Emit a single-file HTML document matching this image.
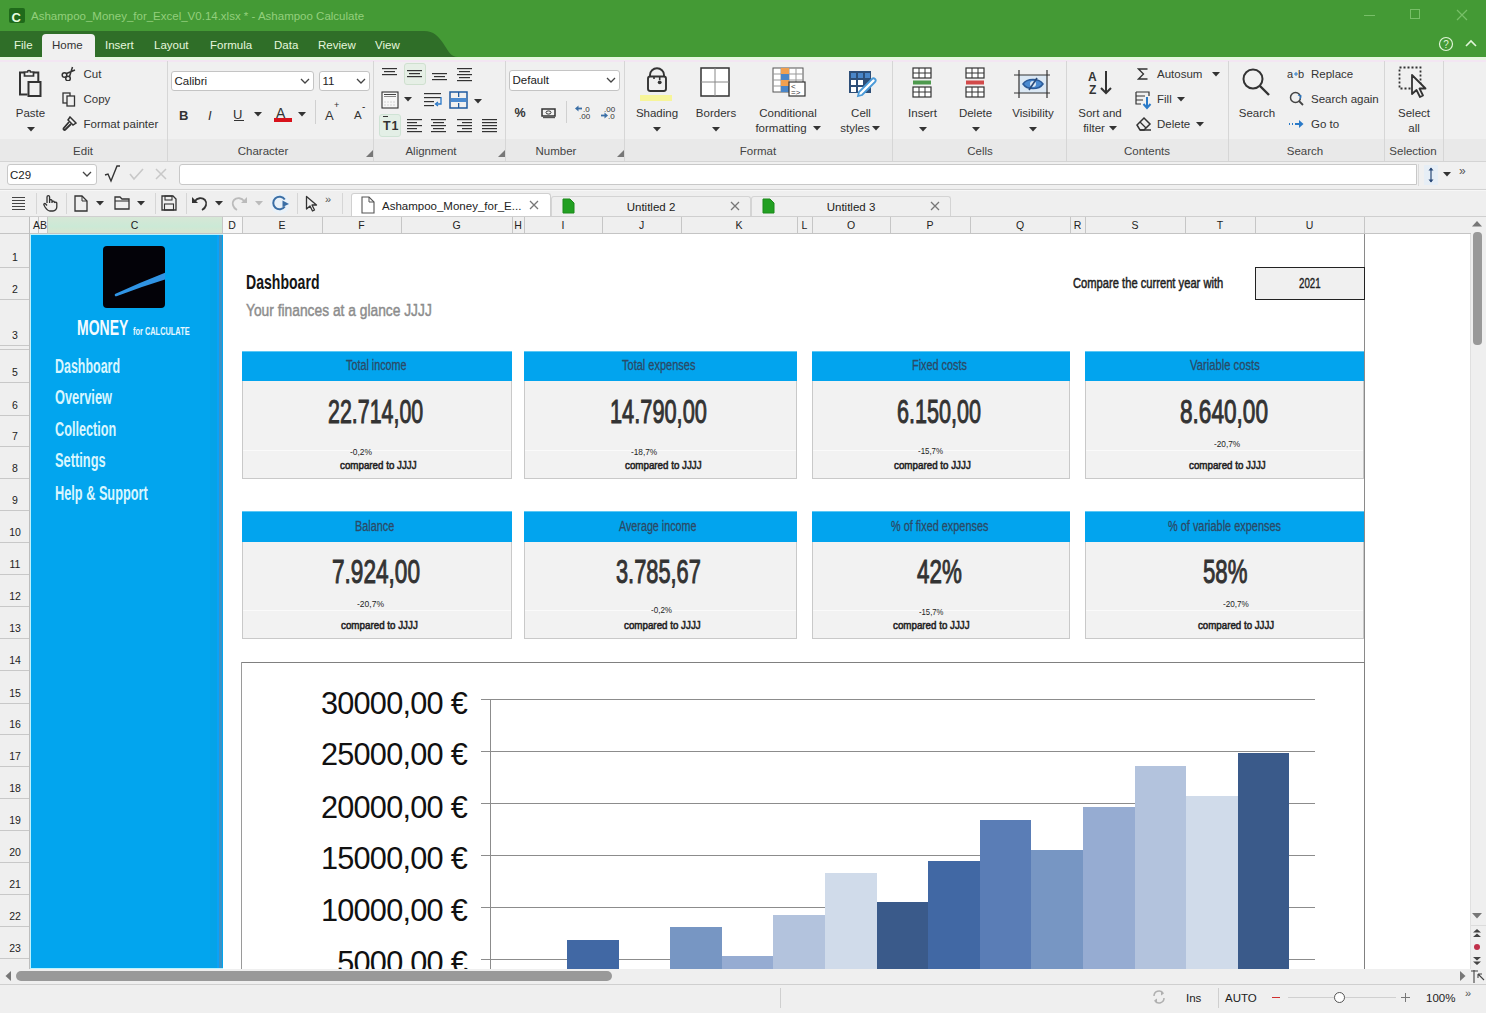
<!DOCTYPE html><html><head><meta charset="utf-8"><style>
html,body{margin:0;padding:0;}
body{width:1486px;height:1013px;overflow:hidden;position:relative;background:#efefef;font-family:"Liberation Sans",sans-serif;}
.t{position:absolute;white-space:nowrap;line-height:1;}
.r{position:absolute;}
</style></head><body>
<div class="r" style="left:0px;top:0px;width:1486px;height:31px;background:#449a35;"></div>
<div class="r" style="left:9px;top:8px;width:16px;height:15px;background:#1f6a1a;border-radius:2px;"></div>
<div class="t" style="left:11.5px;top:11.00px;font-size:13px;color:#e8ffe0;font-weight:bold;font-family:'Liberation Sans';">C</div>
<div class="t" style="left:31px;top:11.27px;font-size:11.5px;color:#93cf7c;font-weight:normal;font-family:'Liberation Sans';">Ashampoo_Money_for_Excel_V0.14.xlsx * - Ashampoo Calculate</div>
<div class="r" style="left:1364px;top:15px;width:11px;height:1px;background:#78bf68;"></div>
<div class="r" style="left:1410px;top:9px;width:10px;height:10px;background:none;border:1px solid #78bf68;box-sizing:border-box;"></div>
<svg class="r" style="left:1456px;top:9px;" width="12" height="12" viewBox="0 0 12 12"><path d="M1 1L11 11M11 1L1 11" stroke="#78bf68" stroke-width="1.2"/></svg>
<svg class="r" style="left:0px;top:31px;" width="1486" height="26" viewBox="0 0 1486 26"><rect x="0" y="0" width="1486" height="27" fill="#449a35"/><path d="M0 0H424C434 0 438 5 443 12C449 21 451 26 458 26H0Z" fill="#2f6e28"/></svg>
<div class="r" style="left:0px;top:57px;width:1486px;height:3px;background:#e6f7df;"></div>
<div class="r" style="left:42px;top:34px;width:53px;height:26px;background:#f0f0f0;border-radius:4px 4px 0 0;"></div>
<div class="t" style="left:14px;top:40.27px;font-size:11.5px;color:#e6f7dd;font-weight:normal;font-family:'Liberation Sans';">File</div>
<div class="t" style="left:52px;top:40.27px;font-size:11.5px;color:#333;font-weight:normal;font-family:'Liberation Sans';">Home</div>
<div class="t" style="left:105px;top:40.27px;font-size:11.5px;color:#e6f7dd;font-weight:normal;font-family:'Liberation Sans';">Insert</div>
<div class="t" style="left:154px;top:40.27px;font-size:11.5px;color:#e6f7dd;font-weight:normal;font-family:'Liberation Sans';">Layout</div>
<div class="t" style="left:210px;top:40.27px;font-size:11.5px;color:#e6f7dd;font-weight:normal;font-family:'Liberation Sans';">Formula</div>
<div class="t" style="left:274px;top:40.27px;font-size:11.5px;color:#e6f7dd;font-weight:normal;font-family:'Liberation Sans';">Data</div>
<div class="t" style="left:318px;top:40.27px;font-size:11.5px;color:#e6f7dd;font-weight:normal;font-family:'Liberation Sans';">Review</div>
<div class="t" style="left:375px;top:40.27px;font-size:11.5px;color:#e6f7dd;font-weight:normal;font-family:'Liberation Sans';">View</div>
<svg class="r" style="left:1438px;top:36px;" width="16" height="16" viewBox="0 0 16 16"><circle cx="8" cy="8" r="6.5" fill="none" stroke="#e0f5d8" stroke-width="1.2"/><text x="8" y="11.5" font-size="10" text-anchor="middle" fill="#e0f5d8" font-family="Liberation Sans">?</text></svg>
<svg class="r" style="left:1465px;top:39px;" width="12" height="8" viewBox="0 0 12 8"><path d="M1 7L6 2L11 7" fill="none" stroke="#e0f5d8" stroke-width="1.6"/></svg>
<div class="r" style="left:0px;top:60px;width:1486px;height:101px;background:#f0f0f0;"></div>
<div class="r" style="left:0px;top:60px;width:1486px;height:2px;background:#f3e6f3;"></div>
<div class="r" style="left:0px;top:139px;width:1486px;height:22px;background:#e9e9e9;"></div>
<div class="r" style="left:0px;top:161px;width:1486px;height:1px;background:#d4d4d4;"></div>
<div class="r" style="left:167px;top:61px;width:1px;height:100px;background:#d6d6d6;"></div>
<div class="r" style="left:373px;top:61px;width:1px;height:100px;background:#d6d6d6;"></div>
<div class="r" style="left:505px;top:61px;width:1px;height:100px;background:#d6d6d6;"></div>
<div class="r" style="left:624px;top:61px;width:1px;height:100px;background:#d6d6d6;"></div>
<div class="r" style="left:892px;top:61px;width:1px;height:100px;background:#d6d6d6;"></div>
<div class="r" style="left:1066px;top:61px;width:1px;height:100px;background:#d6d6d6;"></div>
<div class="r" style="left:1228px;top:61px;width:1px;height:100px;background:#d6d6d6;"></div>
<div class="r" style="left:1384px;top:61px;width:1px;height:100px;background:#d6d6d6;"></div>
<div class="r" style="left:1443px;top:61px;width:1px;height:100px;background:#d6d6d6;"></div>
<div class="t" style="left:-417px;width:1000px;text-align:center;top:146.27px;font-size:11.5px;color:#444;font-weight:normal;font-family:'Liberation Sans';transform:scaleX(1.0);transform-origin:50% 0;">Edit</div>
<div class="t" style="left:-237px;width:1000px;text-align:center;top:146.27px;font-size:11.5px;color:#444;font-weight:normal;font-family:'Liberation Sans';transform:scaleX(1.0);transform-origin:50% 0;">Character</div>
<div class="t" style="left:-69px;width:1000px;text-align:center;top:146.27px;font-size:11.5px;color:#444;font-weight:normal;font-family:'Liberation Sans';transform:scaleX(1.0);transform-origin:50% 0;">Alignment</div>
<div class="t" style="left:56px;width:1000px;text-align:center;top:146.27px;font-size:11.5px;color:#444;font-weight:normal;font-family:'Liberation Sans';transform:scaleX(1.0);transform-origin:50% 0;">Number</div>
<div class="t" style="left:258px;width:1000px;text-align:center;top:146.27px;font-size:11.5px;color:#444;font-weight:normal;font-family:'Liberation Sans';transform:scaleX(1.0);transform-origin:50% 0;">Format</div>
<div class="t" style="left:480px;width:1000px;text-align:center;top:146.27px;font-size:11.5px;color:#444;font-weight:normal;font-family:'Liberation Sans';transform:scaleX(1.0);transform-origin:50% 0;">Cells</div>
<div class="t" style="left:647px;width:1000px;text-align:center;top:146.27px;font-size:11.5px;color:#444;font-weight:normal;font-family:'Liberation Sans';transform:scaleX(1.0);transform-origin:50% 0;">Contents</div>
<div class="t" style="left:805px;width:1000px;text-align:center;top:146.27px;font-size:11.5px;color:#444;font-weight:normal;font-family:'Liberation Sans';transform:scaleX(1.0);transform-origin:50% 0;">Search</div>
<div class="t" style="left:913px;width:1000px;text-align:center;top:146.27px;font-size:11.5px;color:#444;font-weight:normal;font-family:'Liberation Sans';transform:scaleX(1.0);transform-origin:50% 0;">Selection</div>
<svg class="r" style="left:366px;top:150px;" width="7" height="7" viewBox="0 0 7 7"><path d="M7 0V7H0Z" fill="#777"/></svg>
<svg class="r" style="left:498px;top:150px;" width="7" height="7" viewBox="0 0 7 7"><path d="M7 0V7H0Z" fill="#777"/></svg>
<svg class="r" style="left:617px;top:150px;" width="7" height="7" viewBox="0 0 7 7"><path d="M7 0V7H0Z" fill="#777"/></svg>
<svg class="r" style="left:17px;top:68px;" width="26" height="30" viewBox="0 0 26 30"><path d="M7 4.5H3V26.5H10.5M17 4.5H21.3V13" fill="none" stroke="#333" stroke-width="2"/><path d="M7.5 8V4H10.5A1.5 1.5 0 0 1 13.5 4H16.5V8Z" fill="none" stroke="#333" stroke-width="1.7"/><rect x="11.5" y="14" width="12" height="14" fill="#f0f0f0" stroke="#333" stroke-width="2"/></svg>
<div class="t" style="left:-469.5px;width:1000px;text-align:center;top:108.27px;font-size:11.5px;color:#333;font-weight:normal;font-family:'Liberation Sans';transform:scaleX(1.0);transform-origin:50% 0;">Paste</div>
<svg class="r" style="left:26.5px;top:127px;" width="8" height="5" viewBox="0 0 8 5"><path d="M0 0H8L4 4.5Z" fill="#333"/></svg>
<svg class="r" style="left:61px;top:66px;" width="16" height="15" viewBox="0 0 16 15"><circle cx="3.5" cy="9" r="2.3" fill="none" stroke="#333" stroke-width="1.5"/><circle cx="7" cy="12.5" r="2.3" fill="none" stroke="#333" stroke-width="1.5"/><path d="M5.5 7.5L14 4M8.5 10.5L11.5 1" stroke="#333" stroke-width="1.5"/></svg>
<div class="t" style="left:83.5px;top:69.27px;font-size:11.5px;color:#333;font-weight:normal;font-family:'Liberation Sans';">Cut</div>
<svg class="r" style="left:62px;top:92px;" width="14" height="15" viewBox="0 0 14 15"><rect x="1" y="1" width="7" height="10" fill="none" stroke="#333" stroke-width="1.3"/><rect x="5" y="4" width="7.5" height="10" fill="#f0f0f0" stroke="#333" stroke-width="1.3"/></svg>
<div class="t" style="left:83.5px;top:94.27px;font-size:11.5px;color:#333;font-weight:normal;font-family:'Liberation Sans';">Copy</div>
<svg class="r" style="left:61px;top:116px;" width="16" height="16" viewBox="0 0 16 16"><path d="M9 1L15 7L12 9L7 4Z" fill="none" stroke="#333" stroke-width="1.5"/><path d="M8 6L2.5 12.5A1.2 1.2 0 0 0 4 14L10 8" fill="none" stroke="#333" stroke-width="1.8"/></svg>
<div class="t" style="left:83.5px;top:119.27px;font-size:11.5px;color:#333;font-weight:normal;font-family:'Liberation Sans';">Format painter</div>
<div class="r" style="left:171px;top:71px;width:143px;height:20px;background:#fff;border:1px solid #c4c4c4;border-radius:3px;box-sizing:border-box;"></div>
<div class="t" style="left:174.5px;top:76.27px;font-size:11.5px;color:#222;font-weight:normal;font-family:'Liberation Sans';">Calibri</div>
<svg class="r" style="left:300px;top:78px;" width="10" height="6" viewBox="0 0 10 6"><path d="M1 1L5 5L9 1" fill="none" stroke="#444" stroke-width="1.3"/></svg>
<div class="r" style="left:319px;top:71px;width:51px;height:20px;background:#fff;border:1px solid #c4c4c4;border-radius:3px;box-sizing:border-box;"></div>
<div class="t" style="left:322.5px;top:76.27px;font-size:11.5px;color:#222;font-weight:normal;font-family:'Liberation Sans';">11</div>
<svg class="r" style="left:356px;top:78px;" width="10" height="6" viewBox="0 0 10 6"><path d="M1 1L5 5L9 1" fill="none" stroke="#444" stroke-width="1.3"/></svg>
<div class="t" style="left:179px;top:109.00px;font-size:13px;color:#333;font-weight:bold;font-family:'Liberation Sans';">B</div>
<div class="t" style="left:208px;top:109.00px;font-size:13px;color:#333;font-weight:normal;font-family:'Liberation Sans';font-style:italic;">I</div>
<div class="t" style="left:233px;top:108.00px;font-size:13px;color:#333;font-weight:normal;font-family:'Liberation Sans';">U</div>
<div class="r" style="left:234px;top:120px;width:10px;height:1px;background:#333;"></div>
<svg class="r" style="left:254px;top:112px;" width="8" height="5" viewBox="0 0 8 5"><path d="M0 0H8L4 4.5Z" fill="#333"/></svg>
<div class="t" style="left:276px;top:106.15px;font-size:14px;color:#333;font-weight:normal;font-family:'Liberation Sans';">A</div>
<div class="r" style="left:274px;top:118px;width:18px;height:4px;background:#d8121b;"></div>
<svg class="r" style="left:298px;top:112px;" width="8" height="5" viewBox="0 0 8 5"><path d="M0 0H8L4 4.5Z" fill="#333"/></svg>
<div class="r" style="left:315px;top:100px;width:1px;height:24px;background:#d0d0d0;"></div>
<div class="t" style="left:325px;top:109.00px;font-size:13px;color:#333;font-weight:normal;font-family:'Liberation Sans';">A</div>
<div class="t" style="left:334px;top:101.38px;font-size:9px;color:#333;font-weight:normal;font-family:'Liberation Sans';">+</div>
<div class="t" style="left:354px;top:110.27px;font-size:11.5px;color:#333;font-weight:normal;font-family:'Liberation Sans';">A</div>
<div class="t" style="left:362px;top:101.53px;font-size:10px;color:#333;font-weight:normal;font-family:'Liberation Sans';">-</div>
<div class="r" style="left:404px;top:63px;width:22px;height:22px;background:#e6efe6;border:1px solid #cfe0cf;border-radius:3px;box-sizing:border-box;"></div>
<svg class="r" style="left:382px;top:68px;" width="16" height="10" viewBox="0 0 16 10"><rect x="0" y="0" width="15" height="1.2" fill="#333"/><rect x="2" y="3" width="11" height="1.2" fill="#333"/><rect x="0" y="6" width="15" height="1.2" fill="#333"/></svg>
<svg class="r" style="left:407px;top:70px;" width="16" height="10" viewBox="0 0 16 10"><rect x="0" y="0" width="15" height="1.2" fill="#333"/><rect x="2" y="3" width="11" height="1.2" fill="#333"/><rect x="0" y="6" width="15" height="1.2" fill="#333"/></svg>
<svg class="r" style="left:432px;top:73px;" width="16" height="10" viewBox="0 0 16 10"><rect x="0" y="0" width="15" height="1.2" fill="#333"/><rect x="2" y="3" width="11" height="1.2" fill="#333"/><rect x="0" y="6" width="15" height="1.2" fill="#333"/></svg>
<svg class="r" style="left:457px;top:68px;" width="16" height="16" viewBox="0 0 16 16"><rect x="0" y="0" width="15" height="1.2" fill="#333"/><rect x="2" y="3" width="11" height="1.2" fill="#333"/><rect x="0" y="6" width="15" height="1.2" fill="#333"/><rect x="2" y="9" width="11" height="1.2" fill="#333"/><rect x="0" y="12" width="15" height="1.2" fill="#333"/></svg>
<svg class="r" style="left:381px;top:91px;" width="18" height="18" viewBox="0 0 18 18"><rect x="1" y="1" width="16" height="16" fill="#f7f7f7" stroke="#333" stroke-width="1.1"/><rect x="3" y="3" width="12" height="1" fill="#444"/><rect x="3" y="5" width="12" height="1" fill="#888" /><path d="M3 11H15M3 14H15" stroke="#ccc" stroke-width="0.8" stroke-dasharray="2 1"/></svg>
<svg class="r" style="left:404px;top:97px;" width="8" height="5" viewBox="0 0 8 5"><path d="M0 0H8L4 4.5Z" fill="#333"/></svg>
<svg class="r" style="left:424px;top:92px;" width="19" height="16" viewBox="0 0 19 16"><rect x="0" y="1" width="17" height="1.2" fill="#333"/><rect x="0" y="5" width="17" height="1.2" fill="#333"/><rect x="0" y="9" width="10" height="1.2" fill="#333"/><rect x="0" y="13" width="10" height="1.2" fill="#333"/><path d="M17 5V12H12" fill="none" stroke="#2a78c8" stroke-width="1.3"/><path d="M14 10L11.5 12L14 14" fill="none" stroke="#2a78c8" stroke-width="1.3"/></svg>
<svg class="r" style="left:449px;top:91px;" width="19" height="18" viewBox="0 0 19 18"><rect x="1" y="1" width="17" height="16" fill="none" stroke="#1e5aa0" stroke-width="1.5"/><rect x="2" y="7" width="15" height="4" fill="#4a8ad0"/><rect x="9" y="1" width="1.3" height="5" fill="#1e5aa0"/><rect x="9" y="12" width="1.3" height="5" fill="#1e5aa0"/></svg>
<svg class="r" style="left:474px;top:99px;" width="8" height="5" viewBox="0 0 8 5"><path d="M0 0H8L4 4.5Z" fill="#333"/></svg>
<div class="r" style="left:379px;top:114px;width:22px;height:23px;background:#e3efe6;border:1px solid #cfe3d5;border-radius:3px;box-sizing:border-box;"></div>
<div class="t" style="left:383px;top:120.42px;font-size:12.5px;color:#333;font-weight:bold;font-family:'Liberation Sans';">T</div>
<div class="t" style="left:391.5px;top:120.42px;font-size:12.5px;color:#333;font-weight:bold;font-family:'Liberation Sans';">1</div>
<div class="r" style="left:383px;top:116px;width:5px;height:1px;background:#333;"></div>
<svg class="r" style="left:407px;top:119px;" width="16" height="16" viewBox="0 0 16 16"><rect x="0" y="0" width="15" height="1.2" fill="#333"/><rect x="0" y="3" width="10" height="1.2" fill="#333"/><rect x="0" y="6" width="15" height="1.2" fill="#333"/><rect x="0" y="9" width="10" height="1.2" fill="#333"/><rect x="0" y="12" width="15" height="1.2" fill="#333"/></svg>
<svg class="r" style="left:431px;top:119px;" width="16" height="16" viewBox="0 0 16 16"><rect x="0" y="0" width="15" height="1.2" fill="#333"/><rect x="2" y="3" width="11" height="1.2" fill="#333"/><rect x="0" y="6" width="15" height="1.2" fill="#333"/><rect x="2" y="9" width="11" height="1.2" fill="#333"/><rect x="0" y="12" width="15" height="1.2" fill="#333"/></svg>
<svg class="r" style="left:457px;top:119px;" width="16" height="16" viewBox="0 0 16 16"><rect x="0" y="0" width="15" height="1.2" fill="#333"/><rect x="5" y="3" width="10" height="1.2" fill="#333"/><rect x="0" y="6" width="15" height="1.2" fill="#333"/><rect x="5" y="9" width="10" height="1.2" fill="#333"/><rect x="0" y="12" width="15" height="1.2" fill="#333"/></svg>
<svg class="r" style="left:482px;top:119px;" width="16" height="16" viewBox="0 0 16 16"><rect x="0" y="0" width="15" height="1.2" fill="#333"/><rect x="0" y="3" width="15" height="1.2" fill="#333"/><rect x="0" y="6" width="15" height="1.2" fill="#333"/><rect x="0" y="9" width="15" height="1.2" fill="#333"/><rect x="0" y="12" width="15" height="1.2" fill="#333"/></svg>
<div class="r" style="left:509px;top:70px;width:111px;height:21px;background:#fff;border:1px solid #c4c4c4;border-radius:3px;box-sizing:border-box;"></div>
<div class="t" style="left:512.5px;top:75.27px;font-size:11.5px;color:#222;font-weight:normal;font-family:'Liberation Sans';">Default</div>
<svg class="r" style="left:606px;top:77px;" width="10" height="6" viewBox="0 0 10 6"><path d="M1 1L5 5L9 1" fill="none" stroke="#444" stroke-width="1.3"/></svg>
<div class="t" style="left:514.5px;top:107.42px;font-size:12.5px;color:#333;font-weight:bold;font-family:'Liberation Sans';">%</div>
<svg class="r" style="left:541px;top:107px;" width="15" height="12" viewBox="0 0 15 12"><rect x="1" y="2" width="13" height="7" fill="none" stroke="#333" stroke-width="1.5"/><ellipse cx="7.5" cy="5.5" rx="2.5" ry="1.6" fill="none" stroke="#333" stroke-width="1"/><rect x="2" y="10" width="12" height="1.2" fill="#555"/></svg>
<div class="r" style="left:566px;top:101px;width:1px;height:22px;background:#d0d0d0;"></div>
<svg class="r" style="left:575px;top:104px;" width="17" height="16" viewBox="0 0 17 16"><path d="M2 4.5H7" stroke="#3a6ea5" stroke-width="1.8"/><path d="M0 4.5L3.5 1.5V7.5Z" fill="#3a6ea5"/><text x="8" y="8" font-size="8" fill="#333" font-family="Liberation Sans">.0</text><text x="4" y="15" font-size="8" fill="#333" font-family="Liberation Sans">.00</text></svg>
<svg class="r" style="left:600px;top:104px;" width="17" height="16" viewBox="0 0 17 16"><text x="4" y="8" font-size="8" fill="#333" font-family="Liberation Sans">.00</text><path d="M1 11.5H6" stroke="#3a6ea5" stroke-width="1.8"/><path d="M8 11.5L4.5 8.5V14.5Z" fill="#3a6ea5"/><text x="8" y="15" font-size="8" fill="#333" font-family="Liberation Sans">.0</text></svg>
<svg class="r" style="left:645px;top:67px;" width="24" height="26" viewBox="0 0 24 26"><path d="M5 9.5V8A6.9 6.6 0 0 1 19 8V9.5" fill="none" stroke="#333" stroke-width="1.9"/><rect x="3" y="9.5" width="18" height="14.5" rx="2.2" fill="none" stroke="#333" stroke-width="1.9"/><path d="M9 10V12M14.7 10V13" stroke="#333" stroke-width="1.6"/><circle cx="14.7" cy="15.3" r="1.9" fill="#333"/></svg>
<div class="r" style="left:640px;top:95px;width:32px;height:6px;background:#f7f59a;"></div>
<div class="t" style="left:157px;width:1000px;text-align:center;top:108.27px;font-size:11.5px;color:#333;font-weight:normal;font-family:'Liberation Sans';transform:scaleX(1.0);transform-origin:50% 0;">Shading</div>
<svg class="r" style="left:653px;top:127px;" width="8" height="5" viewBox="0 0 8 5"><path d="M0 0H8L4 4.5Z" fill="#333"/></svg>
<svg class="r" style="left:700px;top:67px;" width="31" height="31" viewBox="0 0 31 31"><rect x="1" y="1" width="28" height="28" fill="#fff" stroke="#333" stroke-width="1.5"/><path d="M15 1V29M1 15H29" stroke="#888" stroke-width="1"/></svg>
<div class="t" style="left:216px;width:1000px;text-align:center;top:108.27px;font-size:11.5px;color:#333;font-weight:normal;font-family:'Liberation Sans';transform:scaleX(1.0);transform-origin:50% 0;">Borders</div>
<svg class="r" style="left:712px;top:127px;" width="8" height="5" viewBox="0 0 8 5"><path d="M0 0H8L4 4.5Z" fill="#333"/></svg>
<svg class="r" style="left:772px;top:67px;" width="35" height="31" viewBox="0 0 35 31"><rect x="1" y="1" width="30" height="24" fill="#fff" stroke="#555" stroke-width="1"/><path d="M1 7H31M1 13H31M1 19H31M9 1V25M17 1V25M24 1V25" stroke="#999" stroke-width="1"/><rect x="9" y="1" width="8" height="6" fill="#f0a050"/><rect x="9" y="7" width="8" height="6" fill="#4a86c8"/><rect x="9" y="13" width="8" height="6" fill="#f0a050"/><rect x="9" y="19" width="8" height="6" fill="#4a86c8"/><rect x="17" y="15" width="16" height="14" fill="#fff" stroke="#333" stroke-width="1.2"/><text x="19" y="22" font-size="8" fill="#333" font-family="Liberation Sans">&lt;</text><text x="19" y="28" font-size="8" fill="#333" font-family="Liberation Sans">=&gt;</text></svg>
<div class="t" style="left:288px;width:1000px;text-align:center;top:108.27px;font-size:11.5px;color:#333;font-weight:normal;font-family:'Liberation Sans';transform:scaleX(1.0);transform-origin:50% 0;">Conditional</div>
<div class="t" style="left:281px;width:1000px;text-align:center;top:123.27px;font-size:11.5px;color:#333;font-weight:normal;font-family:'Liberation Sans';transform:scaleX(1.0);transform-origin:50% 0;">formatting</div>
<svg class="r" style="left:813px;top:126px;" width="8" height="5" viewBox="0 0 8 5"><path d="M0 0H8L4 4.5Z" fill="#333"/></svg>
<svg class="r" style="left:848px;top:70px;" width="30" height="28" viewBox="0 0 30 28"><rect x="1" y="1" width="22" height="22" fill="#2e4f78"/><rect x="3" y="10" width="5" height="5" fill="#fff"/><rect x="10" y="10" width="5" height="5" fill="#fff"/><rect x="3" y="17" width="5" height="5" fill="#fff"/><rect x="10" y="17" width="5" height="5" fill="#fff"/><rect x="3" y="3" width="5" height="5" fill="#4a86c8"/><rect x="10" y="3" width="5" height="5" fill="#4a86c8"/><rect x="17" y="3" width="5" height="5" fill="#4a86c8"/><path d="M14 25L27 12A2 2 0 0 0 24 9L11 22L10 26Z" fill="#fff" stroke="#4a9ad8" stroke-width="1.8"/></svg>
<div class="t" style="left:361px;width:1000px;text-align:center;top:108.27px;font-size:11.5px;color:#333;font-weight:normal;font-family:'Liberation Sans';transform:scaleX(1.0);transform-origin:50% 0;">Cell</div>
<div class="t" style="left:355px;width:1000px;text-align:center;top:123.27px;font-size:11.5px;color:#333;font-weight:normal;font-family:'Liberation Sans';transform:scaleX(1.0);transform-origin:50% 0;">styles</div>
<svg class="r" style="left:872px;top:126px;" width="8" height="5" viewBox="0 0 8 5"><path d="M0 0H8L4 4.5Z" fill="#333"/></svg>
<svg class="r" style="left:912px;top:67px;" width="20" height="31" viewBox="0 0 20 31"><rect x="1" y="1" width="18" height="10" fill="#fff" stroke="#333" stroke-width="1.2"/><path d="M7 1V11M13 1V11M1 6H19" stroke="#333" stroke-width="1"/><rect x="1" y="20" width="18" height="10" fill="#fff" stroke="#333" stroke-width="1.2"/><path d="M7 20V30M13 20V30M1 25H19" stroke="#333" stroke-width="1"/><rect x="1" y="13.5" width="18" height="4" fill="#4e9a4e"/></svg>
<div class="t" style="left:422.5px;width:1000px;text-align:center;top:108.27px;font-size:11.5px;color:#333;font-weight:normal;font-family:'Liberation Sans';transform:scaleX(1.0);transform-origin:50% 0;">Insert</div>
<svg class="r" style="left:919px;top:127px;" width="8" height="5" viewBox="0 0 8 5"><path d="M0 0H8L4 4.5Z" fill="#333"/></svg>
<svg class="r" style="left:965px;top:67px;" width="20" height="31" viewBox="0 0 20 31"><rect x="1" y="1" width="18" height="10" fill="#fff" stroke="#333" stroke-width="1.2"/><path d="M7 1V11M13 1V11M1 6H19" stroke="#333" stroke-width="1"/><rect x="1" y="20" width="18" height="10" fill="#fff" stroke="#333" stroke-width="1.2"/><path d="M7 20V30M13 20V30M1 25H19" stroke="#333" stroke-width="1"/><rect x="1" y="13.5" width="18" height="4" fill="#d24a4a"/></svg>
<div class="t" style="left:475.5px;width:1000px;text-align:center;top:108.27px;font-size:11.5px;color:#333;font-weight:normal;font-family:'Liberation Sans';transform:scaleX(1.0);transform-origin:50% 0;">Delete</div>
<svg class="r" style="left:972px;top:127px;" width="8" height="5" viewBox="0 0 8 5"><path d="M0 0H8L4 4.5Z" fill="#333"/></svg>
<svg class="r" style="left:1014px;top:70px;" width="38" height="28" viewBox="0 0 38 28"><rect x="5" y="5" width="28" height="18" fill="#dbe8f4"/><path d="M0 5H36M0 23H36M5 0V28M33 0V28" stroke="#333" stroke-width="1.2"/><path d="M9 14C13 8 25 8 29 14C25 20 13 20 9 14Z" fill="#4a8ad0" stroke="#2a5a98" stroke-width="1.5"/><circle cx="19" cy="14" r="3" fill="#dbe8f4"/><path d="M15 20L23 8" stroke="#2a4a78" stroke-width="1.6"/></svg>
<div class="t" style="left:533px;width:1000px;text-align:center;top:108.27px;font-size:11.5px;color:#333;font-weight:normal;font-family:'Liberation Sans';transform:scaleX(1.0);transform-origin:50% 0;">Visibility</div>
<svg class="r" style="left:1029px;top:127px;" width="8" height="5" viewBox="0 0 8 5"><path d="M0 0H8L4 4.5Z" fill="#333"/></svg>
<svg class="r" style="left:1088px;top:70px;" width="26" height="26" viewBox="0 0 26 26"><text x="0" y="11" font-size="12" font-weight="bold" fill="#333" font-family="Liberation Sans">A</text><text x="1" y="24" font-size="12" font-weight="bold" fill="#333" font-family="Liberation Sans">Z</text><path d="M18 1V23M13 18L18 23L23 18" fill="none" stroke="#333" stroke-width="2"/></svg>
<div class="t" style="left:600px;width:1000px;text-align:center;top:108.27px;font-size:11.5px;color:#333;font-weight:normal;font-family:'Liberation Sans';transform:scaleX(1.0);transform-origin:50% 0;">Sort and</div>
<div class="t" style="left:594px;width:1000px;text-align:center;top:123.27px;font-size:11.5px;color:#333;font-weight:normal;font-family:'Liberation Sans';transform:scaleX(1.0);transform-origin:50% 0;">filter</div>
<svg class="r" style="left:1109px;top:126px;" width="8" height="5" viewBox="0 0 8 5"><path d="M0 0H8L4 4.5Z" fill="#333"/></svg>
<svg class="r" style="left:1137px;top:67px;" width="12" height="14" viewBox="0 0 12 14"><path d="M10.5 2H1.5L6.5 7L1.5 12H10.5" fill="none" stroke="#333" stroke-width="1.3"/></svg>
<div class="t" style="left:1157px;top:69.27px;font-size:11.5px;color:#333;font-weight:normal;font-family:'Liberation Sans';">Autosum</div>
<svg class="r" style="left:1212px;top:72px;" width="8" height="5" viewBox="0 0 8 5"><path d="M0 0H8L4 4.5Z" fill="#333"/></svg>
<svg class="r" style="left:1135px;top:91px;" width="18" height="19" viewBox="0 0 18 19"><path d="M1 1H14V5M1 1V13H6M1 5H10M1 9H8" fill="none" stroke="#333" stroke-width="1.2"/><path d="M12 6V16M8.5 13L12 17L15.5 13" fill="none" stroke="#2a7ac8" stroke-width="2"/></svg>
<div class="t" style="left:1157px;top:94.27px;font-size:11.5px;color:#333;font-weight:normal;font-family:'Liberation Sans';">Fill</div>
<svg class="r" style="left:1177px;top:97px;" width="8" height="5" viewBox="0 0 8 5"><path d="M0 0H8L4 4.5Z" fill="#333"/></svg>
<svg class="r" style="left:1136px;top:116px;" width="16" height="15" viewBox="0 0 16 15"><path d="M1 9L8 2L14 8L8 14H4Z" fill="none" stroke="#333" stroke-width="1.5"/><path d="M4 6L10 12M4 14H15" stroke="#333" stroke-width="1.3"/></svg>
<div class="t" style="left:1157px;top:119.27px;font-size:11.5px;color:#333;font-weight:normal;font-family:'Liberation Sans';">Delete</div>
<svg class="r" style="left:1196px;top:122px;" width="8" height="5" viewBox="0 0 8 5"><path d="M0 0H8L4 4.5Z" fill="#333"/></svg>
<svg class="r" style="left:1241px;top:67px;" width="30" height="30" viewBox="0 0 30 30"><circle cx="12" cy="12" r="9.5" fill="none" stroke="#333" stroke-width="2"/><path d="M19 19L28 28" stroke="#333" stroke-width="2.4"/></svg>
<div class="t" style="left:757px;width:1000px;text-align:center;top:108.27px;font-size:11.5px;color:#333;font-weight:normal;font-family:'Liberation Sans';transform:scaleX(1.0);transform-origin:50% 0;">Search</div>
<svg class="r" style="left:1287px;top:68px;" width="20" height="12" viewBox="0 0 20 12"><text x="0" y="10" font-size="11" fill="#333" font-family="Liberation Sans">a</text><text x="11" y="10" font-size="11" fill="#333" font-family="Liberation Sans">b</text><path d="M7 6H11M9 4V8" stroke="#2a7ac8" stroke-width="1"/></svg>
<div class="t" style="left:1311px;top:69.27px;font-size:11.5px;color:#333;font-weight:normal;font-family:'Liberation Sans';">Replace</div>
<svg class="r" style="left:1289px;top:91px;" width="16" height="16" viewBox="0 0 16 16"><circle cx="6.5" cy="6.5" r="5" fill="none" stroke="#444" stroke-width="1.5"/><path d="M10 10L14 14" stroke="#444" stroke-width="1.8"/><path d="M9 4L12 5L11 8" fill="none" stroke="#2a7ac8" stroke-width="1.2"/></svg>
<div class="t" style="left:1311px;top:94.27px;font-size:11.5px;color:#333;font-weight:normal;font-family:'Liberation Sans';">Search again</div>
<svg class="r" style="left:1288px;top:119px;" width="17" height="10" viewBox="0 0 17 10"><path d="M1 5H2M4 5H5M7 5H13" stroke="#2a7ac8" stroke-width="1.8"/><path d="M11 1L15.5 5L11 9Z" fill="#2a7ac8"/></svg>
<div class="t" style="left:1311px;top:119.27px;font-size:11.5px;color:#333;font-weight:normal;font-family:'Liberation Sans';">Go to</div>
<svg class="r" style="left:1398px;top:66px;" width="32" height="33" viewBox="0 0 32 33"><rect x="1.5" y="1.5" width="21" height="21" fill="none" stroke="#333" stroke-width="1.8" stroke-dasharray="2 2"/><path d="M14 9V28L18.5 24L22 31L25 29.5L21.5 22.5H27.5Z" fill="#f0f0f0" stroke="#333" stroke-width="1.8" stroke-linejoin="round"/></svg>
<div class="t" style="left:914px;width:1000px;text-align:center;top:108.27px;font-size:11.5px;color:#333;font-weight:normal;font-family:'Liberation Sans';transform:scaleX(1.0);transform-origin:50% 0;">Select</div>
<div class="t" style="left:914px;width:1000px;text-align:center;top:123.27px;font-size:11.5px;color:#333;font-weight:normal;font-family:'Liberation Sans';transform:scaleX(1.0);transform-origin:50% 0;">all</div>
<div class="r" style="left:0px;top:162px;width:1486px;height:26px;background:#f0f0f0;"></div>
<div class="r" style="left:0px;top:189px;width:1486px;height:1px;background:#d2d2d2;"></div>
<div class="r" style="left:0px;top:190px;width:1486px;height:1px;background:#f7f7f7;"></div>
<div class="r" style="left:7px;top:164px;width:90px;height:21px;background:#fff;border:1px solid #c8c8c8;border-radius:3px;box-sizing:border-box;"></div>
<div class="t" style="left:10px;top:170.27px;font-size:11.5px;color:#222;font-weight:normal;font-family:'Liberation Sans';">C29</div>
<svg class="r" style="left:82px;top:171px;" width="10" height="6" viewBox="0 0 10 6"><path d="M1 1L5 5L9 1" fill="none" stroke="#444" stroke-width="1.3"/></svg>
<svg class="r" style="left:104px;top:165px;" width="16" height="18" viewBox="0 0 16 18"><path d="M1 10L4 9L7 16L13 1H16" fill="none" stroke="#333" stroke-width="1.4"/></svg>
<svg class="r" style="left:129px;top:167px;" width="16" height="14" viewBox="0 0 16 14"><path d="M1 7L5 12L14 2" fill="none" stroke="#c8c8c8" stroke-width="1.6"/></svg>
<svg class="r" style="left:155px;top:168px;" width="12" height="12" viewBox="0 0 12 12"><path d="M1 1L11 11M11 1L1 11" stroke="#c8c8c8" stroke-width="1.5"/></svg>
<div class="r" style="left:179px;top:164px;width:1238px;height:21px;background:#fff;border:1px solid #c8c8c8;border-radius:3px 0 0 3px;box-sizing:border-box;"></div>
<div class="r" style="left:1418px;top:164px;width:1px;height:22px;background:#dadada;"></div>
<div class="r" style="left:1424px;top:165px;width:14px;height:20px;background:#e6eef6;"></div>
<svg class="r" style="left:1426px;top:165px;" width="10" height="20" viewBox="0 0 10 20"><path d="M5 3V17" stroke="#2a4a78" stroke-width="1.2"/><path d="M2.5 5.5L5 2.5L7.5 5.5ZM2.5 14.5L5 17.5L7.5 14.5Z" fill="#2a4a78"/></svg>
<svg class="r" style="left:1443px;top:172px;" width="9" height="5" viewBox="0 0 9 5"><path d="M0 0H8L4 4.5Z" fill="#333"/></svg>
<div class="t" style="left:1459px;top:164.84px;font-size:12px;color:#555;font-weight:normal;font-family:'Liberation Sans';">»</div>
<div class="r" style="left:0px;top:191px;width:1486px;height:26px;background:#efefef;"></div>
<div class="r" style="left:0px;top:216px;width:1486px;height:1px;background:#d0d0d0;"></div>
<div class="r" style="left:36px;top:193px;width:1px;height:21px;background:#d6d6d6;"></div>
<div class="r" style="left:66px;top:193px;width:1px;height:21px;background:#d6d6d6;"></div>
<div class="r" style="left:155px;top:193px;width:1px;height:21px;background:#d6d6d6;"></div>
<div class="r" style="left:186px;top:193px;width:1px;height:21px;background:#d6d6d6;"></div>
<div class="r" style="left:297px;top:193px;width:1px;height:21px;background:#d6d6d6;"></div>
<div class="r" style="left:342px;top:193px;width:1px;height:21px;background:#d6d6d6;"></div>
<svg class="r" style="left:12px;top:197px;" width="14" height="14" viewBox="0 0 14 14"><rect x="0" y="0" width="13" height="1" fill="#444"/><rect x="0" y="3" width="13" height="1" fill="#444"/><rect x="0" y="6" width="13" height="1" fill="#444"/><rect x="0" y="9" width="13" height="1" fill="#444"/><rect x="0" y="12" width="13" height="1" fill="#444"/></svg>
<svg class="r" style="left:43px;top:194px;" width="15" height="18" viewBox="0 0 15 18"><path d="M4 9V3A1.3 1.3 0 0 1 6.6 3V9M6.6 8V6.5A1.3 1.3 0 0 1 9 6.5V9M9 8A1.3 1.3 0 0 1 11.4 8V9M11.4 9A1.3 1.3 0 0 1 13.8 9V13C13.8 15 12 17 10 17H7C5 17 4 16 2 13L1 11C0.5 10 1.5 9 2.5 9.8L4 11.5" fill="none" stroke="#333" stroke-width="1.3"/></svg>
<svg class="r" style="left:74px;top:195px;" width="14" height="17" viewBox="0 0 14 17"><path d="M1 1H8L13 6V16H1Z" fill="none" stroke="#333" stroke-width="1.3"/><path d="M8 1V6H13" fill="none" stroke="#333" stroke-width="1"/></svg>
<svg class="r" style="left:96px;top:201px;" width="8" height="5" viewBox="0 0 8 5"><path d="M0 0H8L4 4.5Z" fill="#333"/></svg>
<svg class="r" style="left:114px;top:196px;" width="16" height="14" viewBox="0 0 16 14"><path d="M1 1H6L8 3H15V13H1Z" fill="none" stroke="#333" stroke-width="1.3"/><path d="M1 5H15" stroke="#333" stroke-width="1.1"/></svg>
<svg class="r" style="left:137px;top:201px;" width="8" height="5" viewBox="0 0 8 5"><path d="M0 0H8L4 4.5Z" fill="#333"/></svg>
<svg class="r" style="left:161px;top:195px;" width="16" height="16" viewBox="0 0 16 16"><path d="M1 1H12L15 4V15H1Z" fill="none" stroke="#333" stroke-width="1.3"/><rect x="4" y="1" width="7" height="4" fill="none" stroke="#333" stroke-width="1.1"/><rect x="3.5" y="9" width="9" height="6" fill="none" stroke="#333" stroke-width="1.1"/></svg>
<svg class="r" style="left:191px;top:195px;" width="17" height="16" viewBox="0 0 17 16"><path d="M4 6C6 3 11 2 14 5C16.5 8 15 13 11 15" fill="none" stroke="#333" stroke-width="1.8"/><path d="M1 2V8H7Z" fill="#333"/></svg>
<svg class="r" style="left:215px;top:201px;" width="8" height="5" viewBox="0 0 8 5"><path d="M0 0H8L4 4.5Z" fill="#333"/></svg>
<svg class="r" style="left:231px;top:195px;" width="17" height="16" viewBox="0 0 17 16"><path d="M13 6C11 3 6 2 3 5C0.5 8 2 13 6 15" fill="none" stroke="#bbb" stroke-width="1.8"/><path d="M16 2V8H10Z" fill="#bbb"/></svg>
<svg class="r" style="left:255px;top:201px;" width="8" height="5" viewBox="0 0 8 5"><path d="M0 0H8L4 4.5Z" fill="#bbb"/></svg>
<div class="r" style="left:270px;top:193px;width:20px;height:21px;background:#e9f1f8;border-radius:50%;"></div>
<svg class="r" style="left:271px;top:194px;" width="19" height="18" viewBox="0 0 19 18"><path d="M13.8 5.5A6.3 6.3 0 1 0 13.8 12.5" fill="none" stroke="#3a6ea5" stroke-width="2"/><path d="M11.5 6.5L18 10L11.5 13Z" fill="#3a6ea5"/></svg>
<svg class="r" style="left:305px;top:195px;" width="13" height="17" viewBox="0 0 13 17"><path d="M1.5 1.5V14L5 11L7.5 16L9.5 15L7 10H11.5Z" fill="none" stroke="#333" stroke-width="1.3" stroke-linejoin="round"/></svg>
<div class="t" style="left:325px;top:193.69px;font-size:11px;color:#555;font-weight:normal;font-family:'Liberation Sans';">»</div>
<div class="r" style="left:351px;top:193px;width:200px;height:24px;background:#fff;border:1px solid #d0d0d0;border-bottom:none;border-radius:3px 3px 0 0;box-sizing:border-box;"></div>
<svg class="r" style="left:361px;top:196px;" width="14" height="18" viewBox="0 0 14 18"><path d="M1 1H8L13 6V17H1Z" fill="#fff" stroke="#555" stroke-width="1.1"/><path d="M8 1V6H13" fill="none" stroke="#555" stroke-width="1"/></svg>
<div class="t" style="left:382px;top:201.27px;font-size:11.5px;color:#222;font-weight:normal;font-family:'Liberation Sans';">Ashampoo_Money_for_E...</div>
<svg class="r" style="left:529px;top:200px;" width="10" height="10" viewBox="0 0 10 10"><path d="M1 1L9 9M9 1L1 9" stroke="#777" stroke-width="1.3"/></svg>
<div class="r" style="left:551px;top:196px;width:200px;height:21px;background:#efefef;border:1px solid #d4d4d4;border-bottom:none;border-radius:3px 3px 0 0;box-sizing:border-box;"></div>
<svg class="r" style="left:562px;top:198px;" width="13" height="16" viewBox="0 0 13 16"><path d="M1 1H8L12 5V15H1Z" fill="#22a022" stroke="#1a8a1a" stroke-width="1"/></svg>
<div class="t" style="left:151px;width:1000px;text-align:center;top:202.27px;font-size:11.5px;color:#222;font-weight:normal;font-family:'Liberation Sans';transform:scaleX(1.0);transform-origin:50% 0;">Untitled 2</div>
<svg class="r" style="left:730px;top:201px;" width="10" height="10" viewBox="0 0 10 10"><path d="M1 1L9 9M9 1L1 9" stroke="#777" stroke-width="1.3"/></svg>
<div class="r" style="left:751px;top:196px;width:200px;height:21px;background:#efefef;border:1px solid #d4d4d4;border-bottom:none;border-radius:3px 3px 0 0;box-sizing:border-box;"></div>
<svg class="r" style="left:762px;top:198px;" width="13" height="16" viewBox="0 0 13 16"><path d="M1 1H8L12 5V15H1Z" fill="#22a022" stroke="#1a8a1a" stroke-width="1"/></svg>
<div class="t" style="left:351px;width:1000px;text-align:center;top:202.27px;font-size:11.5px;color:#222;font-weight:normal;font-family:'Liberation Sans';transform:scaleX(1.0);transform-origin:50% 0;">Untitled 3</div>
<svg class="r" style="left:930px;top:201px;" width="10" height="10" viewBox="0 0 10 10"><path d="M1 1L9 9M9 1L1 9" stroke="#777" stroke-width="1.3"/></svg>
<div class="r" style="left:0px;top:217px;width:1486px;height:16px;background:#efefef;"></div>
<div class="r" style="left:0px;top:216px;width:1486px;height:1px;background:#cfcfcf;"></div>
<div class="r" style="left:0px;top:233px;width:1471px;height:1px;background:#c4c4c4;"></div>
<div class="r" style="left:47px;top:217px;width:175px;height:16px;background:linear-gradient(#d6e7d6,#cbe9d6 60%,#d8e4cf);"></div>
<div class="r" style="left:30px;top:217px;width:17px;height:16px;background:#f4f4f4;"></div>
<div class="r" style="left:222px;top:217px;width:20px;height:16px;background:#f6f6f6;"></div>
<div class="r" style="left:38px;top:217px;width:1px;height:16px;background:#c6c6c6;"></div>
<div class="r" style="left:47px;top:217px;width:1px;height:16px;background:#c6c6c6;"></div>
<div class="r" style="left:222px;top:217px;width:1px;height:16px;background:#c6c6c6;"></div>
<div class="r" style="left:242px;top:217px;width:1px;height:16px;background:#c6c6c6;"></div>
<div class="r" style="left:322px;top:217px;width:1px;height:16px;background:#c6c6c6;"></div>
<div class="r" style="left:401px;top:217px;width:1px;height:16px;background:#c6c6c6;"></div>
<div class="r" style="left:512px;top:217px;width:1px;height:16px;background:#c6c6c6;"></div>
<div class="r" style="left:524px;top:217px;width:1px;height:16px;background:#c6c6c6;"></div>
<div class="r" style="left:602px;top:217px;width:1px;height:16px;background:#c6c6c6;"></div>
<div class="r" style="left:681px;top:217px;width:1px;height:16px;background:#c6c6c6;"></div>
<div class="r" style="left:797px;top:217px;width:1px;height:16px;background:#c6c6c6;"></div>
<div class="r" style="left:812px;top:217px;width:1px;height:16px;background:#c6c6c6;"></div>
<div class="r" style="left:890px;top:217px;width:1px;height:16px;background:#c6c6c6;"></div>
<div class="r" style="left:970px;top:217px;width:1px;height:16px;background:#c6c6c6;"></div>
<div class="r" style="left:1070px;top:217px;width:1px;height:16px;background:#c6c6c6;"></div>
<div class="r" style="left:1085px;top:217px;width:1px;height:16px;background:#c6c6c6;"></div>
<div class="r" style="left:1185px;top:217px;width:1px;height:16px;background:#c6c6c6;"></div>
<div class="r" style="left:1255px;top:217px;width:1px;height:16px;background:#c6c6c6;"></div>
<div class="r" style="left:1364px;top:217px;width:1px;height:16px;background:#c6c6c6;"></div>
<div class="r" style="left:1471px;top:217px;width:1px;height:16px;background:#c6c6c6;"></div>
<div class="t" style="left:33px;top:220.11px;font-size:10.5px;color:#222;font-weight:normal;font-family:'Liberation Sans';">AB</div>
<div class="t" style="left:-365.5px;width:1000px;text-align:center;top:220.11px;font-size:10.5px;color:#222;font-weight:normal;font-family:'Liberation Sans';transform:scaleX(1.0);transform-origin:50% 0;">C</div>
<div class="t" style="left:-268.0px;width:1000px;text-align:center;top:220.11px;font-size:10.5px;color:#222;font-weight:normal;font-family:'Liberation Sans';transform:scaleX(1.0);transform-origin:50% 0;">D</div>
<div class="t" style="left:-218.0px;width:1000px;text-align:center;top:220.11px;font-size:10.5px;color:#222;font-weight:normal;font-family:'Liberation Sans';transform:scaleX(1.0);transform-origin:50% 0;">E</div>
<div class="t" style="left:-138.5px;width:1000px;text-align:center;top:220.11px;font-size:10.5px;color:#222;font-weight:normal;font-family:'Liberation Sans';transform:scaleX(1.0);transform-origin:50% 0;">F</div>
<div class="t" style="left:-43.5px;width:1000px;text-align:center;top:220.11px;font-size:10.5px;color:#222;font-weight:normal;font-family:'Liberation Sans';transform:scaleX(1.0);transform-origin:50% 0;">G</div>
<div class="t" style="left:18.0px;width:1000px;text-align:center;top:220.11px;font-size:10.5px;color:#222;font-weight:normal;font-family:'Liberation Sans';transform:scaleX(1.0);transform-origin:50% 0;">H</div>
<div class="t" style="left:63.0px;width:1000px;text-align:center;top:220.11px;font-size:10.5px;color:#222;font-weight:normal;font-family:'Liberation Sans';transform:scaleX(1.0);transform-origin:50% 0;">I</div>
<div class="t" style="left:141.5px;width:1000px;text-align:center;top:220.11px;font-size:10.5px;color:#222;font-weight:normal;font-family:'Liberation Sans';transform:scaleX(1.0);transform-origin:50% 0;">J</div>
<div class="t" style="left:239.0px;width:1000px;text-align:center;top:220.11px;font-size:10.5px;color:#222;font-weight:normal;font-family:'Liberation Sans';transform:scaleX(1.0);transform-origin:50% 0;">K</div>
<div class="t" style="left:304.5px;width:1000px;text-align:center;top:220.11px;font-size:10.5px;color:#222;font-weight:normal;font-family:'Liberation Sans';transform:scaleX(1.0);transform-origin:50% 0;">L</div>
<div class="t" style="left:351.0px;width:1000px;text-align:center;top:220.11px;font-size:10.5px;color:#222;font-weight:normal;font-family:'Liberation Sans';transform:scaleX(1.0);transform-origin:50% 0;">O</div>
<div class="t" style="left:430.0px;width:1000px;text-align:center;top:220.11px;font-size:10.5px;color:#222;font-weight:normal;font-family:'Liberation Sans';transform:scaleX(1.0);transform-origin:50% 0;">P</div>
<div class="t" style="left:520.0px;width:1000px;text-align:center;top:220.11px;font-size:10.5px;color:#222;font-weight:normal;font-family:'Liberation Sans';transform:scaleX(1.0);transform-origin:50% 0;">Q</div>
<div class="t" style="left:577.5px;width:1000px;text-align:center;top:220.11px;font-size:10.5px;color:#222;font-weight:normal;font-family:'Liberation Sans';transform:scaleX(1.0);transform-origin:50% 0;">R</div>
<div class="t" style="left:635.0px;width:1000px;text-align:center;top:220.11px;font-size:10.5px;color:#222;font-weight:normal;font-family:'Liberation Sans';transform:scaleX(1.0);transform-origin:50% 0;">S</div>
<div class="t" style="left:720.0px;width:1000px;text-align:center;top:220.11px;font-size:10.5px;color:#222;font-weight:normal;font-family:'Liberation Sans';transform:scaleX(1.0);transform-origin:50% 0;">T</div>
<div class="t" style="left:809.5px;width:1000px;text-align:center;top:220.11px;font-size:10.5px;color:#222;font-weight:normal;font-family:'Liberation Sans';transform:scaleX(1.0);transform-origin:50% 0;">U</div>
<div class="r" style="left:0px;top:234px;width:30px;height:735px;background:#efefef;"></div>
<div class="r" style="left:29px;top:217px;width:1px;height:752px;background:#bdbdbd;"></div>
<div class="r" style="left:0px;top:267px;width:29px;height:1px;background:#c8c8c8;"></div>
<div class="t" style="left:-485px;width:1000px;text-align:center;top:252.11px;font-size:10.5px;color:#222;font-weight:normal;font-family:'Liberation Sans';transform:scaleX(1.0);transform-origin:50% 0;">1</div>
<div class="r" style="left:0px;top:299px;width:29px;height:1px;background:#c8c8c8;"></div>
<div class="t" style="left:-485px;width:1000px;text-align:center;top:284.11px;font-size:10.5px;color:#222;font-weight:normal;font-family:'Liberation Sans';transform:scaleX(1.0);transform-origin:50% 0;">2</div>
<div class="r" style="left:0px;top:345px;width:29px;height:1px;background:#c8c8c8;"></div>
<div class="t" style="left:-485px;width:1000px;text-align:center;top:330.11px;font-size:10.5px;color:#222;font-weight:normal;font-family:'Liberation Sans';transform:scaleX(1.0);transform-origin:50% 0;">3</div>
<div class="r" style="left:0px;top:382px;width:29px;height:1px;background:#c8c8c8;"></div>
<div class="t" style="left:-485px;width:1000px;text-align:center;top:367.11px;font-size:10.5px;color:#222;font-weight:normal;font-family:'Liberation Sans';transform:scaleX(1.0);transform-origin:50% 0;">5</div>
<div class="r" style="left:0px;top:415px;width:29px;height:1px;background:#c8c8c8;"></div>
<div class="t" style="left:-485px;width:1000px;text-align:center;top:400.11px;font-size:10.5px;color:#222;font-weight:normal;font-family:'Liberation Sans';transform:scaleX(1.0);transform-origin:50% 0;">6</div>
<div class="r" style="left:0px;top:446px;width:29px;height:1px;background:#c8c8c8;"></div>
<div class="t" style="left:-485px;width:1000px;text-align:center;top:431.11px;font-size:10.5px;color:#222;font-weight:normal;font-family:'Liberation Sans';transform:scaleX(1.0);transform-origin:50% 0;">7</div>
<div class="r" style="left:0px;top:478px;width:29px;height:1px;background:#c8c8c8;"></div>
<div class="t" style="left:-485px;width:1000px;text-align:center;top:463.11px;font-size:10.5px;color:#222;font-weight:normal;font-family:'Liberation Sans';transform:scaleX(1.0);transform-origin:50% 0;">8</div>
<div class="r" style="left:0px;top:510px;width:29px;height:1px;background:#c8c8c8;"></div>
<div class="t" style="left:-485px;width:1000px;text-align:center;top:495.11px;font-size:10.5px;color:#222;font-weight:normal;font-family:'Liberation Sans';transform:scaleX(1.0);transform-origin:50% 0;">9</div>
<div class="r" style="left:0px;top:542px;width:29px;height:1px;background:#c8c8c8;"></div>
<div class="t" style="left:-485px;width:1000px;text-align:center;top:527.11px;font-size:10.5px;color:#222;font-weight:normal;font-family:'Liberation Sans';transform:scaleX(1.0);transform-origin:50% 0;">10</div>
<div class="r" style="left:0px;top:574px;width:29px;height:1px;background:#c8c8c8;"></div>
<div class="t" style="left:-485px;width:1000px;text-align:center;top:559.11px;font-size:10.5px;color:#222;font-weight:normal;font-family:'Liberation Sans';transform:scaleX(1.0);transform-origin:50% 0;">11</div>
<div class="r" style="left:0px;top:606px;width:29px;height:1px;background:#c8c8c8;"></div>
<div class="t" style="left:-485px;width:1000px;text-align:center;top:591.11px;font-size:10.5px;color:#222;font-weight:normal;font-family:'Liberation Sans';transform:scaleX(1.0);transform-origin:50% 0;">12</div>
<div class="r" style="left:0px;top:638px;width:29px;height:1px;background:#c8c8c8;"></div>
<div class="t" style="left:-485px;width:1000px;text-align:center;top:623.11px;font-size:10.5px;color:#222;font-weight:normal;font-family:'Liberation Sans';transform:scaleX(1.0);transform-origin:50% 0;">13</div>
<div class="r" style="left:0px;top:670px;width:29px;height:1px;background:#c8c8c8;"></div>
<div class="t" style="left:-485px;width:1000px;text-align:center;top:655.11px;font-size:10.5px;color:#222;font-weight:normal;font-family:'Liberation Sans';transform:scaleX(1.0);transform-origin:50% 0;">14</div>
<div class="r" style="left:0px;top:703px;width:29px;height:1px;background:#c8c8c8;"></div>
<div class="t" style="left:-485px;width:1000px;text-align:center;top:688.11px;font-size:10.5px;color:#222;font-weight:normal;font-family:'Liberation Sans';transform:scaleX(1.0);transform-origin:50% 0;">15</div>
<div class="r" style="left:0px;top:734px;width:29px;height:1px;background:#c8c8c8;"></div>
<div class="t" style="left:-485px;width:1000px;text-align:center;top:719.11px;font-size:10.5px;color:#222;font-weight:normal;font-family:'Liberation Sans';transform:scaleX(1.0);transform-origin:50% 0;">16</div>
<div class="r" style="left:0px;top:766px;width:29px;height:1px;background:#c8c8c8;"></div>
<div class="t" style="left:-485px;width:1000px;text-align:center;top:751.11px;font-size:10.5px;color:#222;font-weight:normal;font-family:'Liberation Sans';transform:scaleX(1.0);transform-origin:50% 0;">17</div>
<div class="r" style="left:0px;top:798px;width:29px;height:1px;background:#c8c8c8;"></div>
<div class="t" style="left:-485px;width:1000px;text-align:center;top:783.11px;font-size:10.5px;color:#222;font-weight:normal;font-family:'Liberation Sans';transform:scaleX(1.0);transform-origin:50% 0;">18</div>
<div class="r" style="left:0px;top:830px;width:29px;height:1px;background:#c8c8c8;"></div>
<div class="t" style="left:-485px;width:1000px;text-align:center;top:815.11px;font-size:10.5px;color:#222;font-weight:normal;font-family:'Liberation Sans';transform:scaleX(1.0);transform-origin:50% 0;">19</div>
<div class="r" style="left:0px;top:862px;width:29px;height:1px;background:#c8c8c8;"></div>
<div class="t" style="left:-485px;width:1000px;text-align:center;top:847.11px;font-size:10.5px;color:#222;font-weight:normal;font-family:'Liberation Sans';transform:scaleX(1.0);transform-origin:50% 0;">20</div>
<div class="r" style="left:0px;top:894px;width:29px;height:1px;background:#c8c8c8;"></div>
<div class="t" style="left:-485px;width:1000px;text-align:center;top:879.11px;font-size:10.5px;color:#222;font-weight:normal;font-family:'Liberation Sans';transform:scaleX(1.0);transform-origin:50% 0;">21</div>
<div class="r" style="left:0px;top:926px;width:29px;height:1px;background:#c8c8c8;"></div>
<div class="t" style="left:-485px;width:1000px;text-align:center;top:911.11px;font-size:10.5px;color:#222;font-weight:normal;font-family:'Liberation Sans';transform:scaleX(1.0);transform-origin:50% 0;">22</div>
<div class="r" style="left:0px;top:958px;width:29px;height:1px;background:#c8c8c8;"></div>
<div class="t" style="left:-485px;width:1000px;text-align:center;top:943.11px;font-size:10.5px;color:#222;font-weight:normal;font-family:'Liberation Sans';transform:scaleX(1.0);transform-origin:50% 0;">23</div>
<div class="r" style="left:0px;top:345px;width:29px;height:1px;background:#c8c8c8;"></div>
<div class="r" style="left:0px;top:349px;width:29px;height:1px;background:#c8c8c8;"></div>
<div class="r" style="left:30px;top:234px;width:1441px;height:735px;background:#ffffff;"></div>
<div class="r" style="left:1364px;top:234px;width:1px;height:735px;background:#8a8a8a;"></div>
<div class="r" style="left:30px;top:234px;width:193px;height:735px;background:#02a5ee;"></div>
<div class="r" style="left:210px;top:234px;width:7px;height:735px;background:#05a3e8;"></div>
<div class="r" style="left:217px;top:234px;width:2px;height:735px;background:#0aa2f8;"></div>
<div class="r" style="left:219px;top:234px;width:3px;height:735px;background:#3a92c6;"></div>
<div class="r" style="left:30px;top:234px;width:193px;height:1px;background:#b9f3ff;"></div>
<div class="r" style="left:30px;top:968px;width:193px;height:1px;background:#b9f3ff;"></div>
<div class="r" style="left:30px;top:234px;width:1px;height:735px;background:#b9f3ff;"></div>
<div class="r" style="left:1471px;top:217px;width:15px;height:752px;background:#efefef;"></div>
<div class="r" style="left:1470px;top:234px;width:1px;height:735px;background:#e0e0e0;"></div>
<svg class="r" style="left:1472px;top:221px;" width="10" height="6" viewBox="0 0 10 6"><path d="M0 5.5H10L5 0Z" fill="#777"/></svg>
<div class="r" style="left:1473px;top:232px;width:9px;height:113px;background:#999;border-radius:4px;"></div>
<svg class="r" style="left:1472px;top:913px;" width="10" height="6" viewBox="0 0 10 6"><path d="M0 0H10L5 5.5Z" fill="#777"/></svg>
<div class="r" style="left:1471px;top:925px;width:15px;height:1px;background:#dcdcdc;"></div>
<svg class="r" style="left:1472px;top:928px;" width="10" height="10" viewBox="0 0 10 10"><path d="M1 4.5L5 1L9 4.5ZM1 9L5 5.5L9 9Z" fill="#444"/></svg>
<div class="r" style="left:1474px;top:944px;width:6px;height:6px;background:#c0304a;border-radius:50%;"></div>
<svg class="r" style="left:1472px;top:956px;" width="10" height="10" viewBox="0 0 10 10"><path d="M1 1L5 4.5L9 1ZM1 5.5L5 9L9 5.5Z" fill="#444"/></svg>
<div class="r" style="left:0px;top:969px;width:1471px;height:15px;background:#efefef;"></div>
<div class="r" style="left:0px;top:984px;width:1486px;height:1px;background:#cfcfcf;"></div>
<svg class="r" style="left:5px;top:971px;" width="7" height="10" viewBox="0 0 7 10"><path d="M6 0V10L0.5 5Z" fill="#777"/></svg>
<div class="r" style="left:16px;top:971px;width:596px;height:10px;background:#999;border-radius:5px;"></div>
<svg class="r" style="left:1459px;top:971px;" width="7" height="10" viewBox="0 0 7 10"><path d="M1 0V10L6.5 5Z" fill="#777"/></svg>
<svg class="r" style="left:1470px;top:969px;" width="16" height="15" viewBox="0 0 16 15"><path d="M4 1V14M1 2H8M8 5L14 11M8 5H12M8 5V9" fill="none" stroke="#444" stroke-width="1.1"/></svg>
<svg class="r" style="left:103px;top:246px;" width="62" height="62" viewBox="0 0 62 62"><rect x="0" y="0" width="62" height="62" rx="4" fill="#030208"/><path d="M12.5 47.8Q38 36 62 26.7V33.6Q38 41 13.5 50.2A1.3 1.3 0 0 1 12.5 47.8Z" fill="#3094e4"/></svg>
<div class="t" style="left:76.7px;top:316.94px;font-size:21.93px;color:#f4fbff;font-weight:bold;font-family:'Liberation Sans';transform:scaleX(0.6381);transform-origin:0 0;">MONEY</div>
<div class="t" style="left:133px;top:326.98px;font-size:10.06px;color:#e8f8ff;font-weight:bold;font-family:'Liberation Sans';transform:scaleX(0.7367);transform-origin:0 0;">for CALCULATE</div>
<div class="t" style="left:55.3px;top:355.78px;font-size:20.11px;color:#d8f6ff;font-weight:bold;font-family:'Liberation Sans';transform:scaleX(0.6188);transform-origin:0 0;">Dashboard</div>
<div class="t" style="left:55.3px;top:387.28px;font-size:20.11px;color:#d8f6ff;font-weight:bold;font-family:'Liberation Sans';transform:scaleX(0.6373);transform-origin:0 0;">Overview</div>
<div class="t" style="left:55.3px;top:418.78px;font-size:20.11px;color:#d8f6ff;font-weight:bold;font-family:'Liberation Sans';transform:scaleX(0.6296);transform-origin:0 0;">Collection</div>
<div class="t" style="left:55.3px;top:450.28px;font-size:20.11px;color:#d8f6ff;font-weight:bold;font-family:'Liberation Sans';transform:scaleX(0.6391);transform-origin:0 0;">Settings</div>
<div class="t" style="left:55.3px;top:483.18px;font-size:20.11px;color:#d8f6ff;font-weight:bold;font-family:'Liberation Sans';transform:scaleX(0.6334);transform-origin:0 0;">Help &amp; Support</div>
<div class="t" style="left:245.6px;top:272.28px;font-size:20.81px;color:#151515;font-weight:bold;font-family:'Liberation Sans';transform:scaleX(0.6765);transform-origin:0 0;">Dashboard</div>
<div class="t" style="left:245.6px;top:303.21px;font-size:16.76px;color:#8c8c8c;font-weight:normal;font-family:'Liberation Sans';transform:scaleX(0.8234);transform-origin:0 0;-webkit-text-stroke:0.45px #8c8c8c;">Your finances at a glance JJJJ</div>
<div class="t" style="left:1073.4px;top:276.10px;font-size:14.53px;color:#222;font-weight:normal;font-family:'Liberation Sans';transform:scaleX(0.7698);transform-origin:0 0;-webkit-text-stroke:0.5px #222;">Compare the current year with</div>
<div class="r" style="left:1255px;top:267px;width:110px;height:33px;background:#f0f0f0;border:1.5px solid #222;box-sizing:border-box;"></div>
<div class="t" style="left:1299.4px;top:276.10px;font-size:14.53px;color:#222;font-weight:normal;font-family:'Liberation Sans';transform:scaleX(0.6688);transform-origin:0 0;-webkit-text-stroke:0.4px #222;">2021</div>
<div class="r" style="left:242px;top:351px;width:270px;height:30px;background:#02a4ee;"></div>
<div class="r" style="left:242px;top:351px;width:270px;height:1px;background:#5cc8f5;"></div>
<div class="r" style="left:242px;top:381px;width:270px;height:98px;background:#f2f2f2;border:1px solid #c9c9c9;border-top:none;box-sizing:border-box;"></div>
<div class="r" style="left:243px;top:450px;width:268px;height:1px;background:#fafafa;"></div>
<div class="t" style="left:346px;top:358.10px;font-size:14.53px;color:#2b4a66;font-weight:normal;font-family:'Liberation Sans';transform:scaleX(0.7436);transform-origin:0 0;-webkit-text-stroke:0.3px #2b4a66;">Total income</div>
<div class="t" style="left:328px;top:395.87px;font-size:32.4px;color:#333;font-weight:normal;font-family:'Liberation Sans';transform:scaleX(0.6606);transform-origin:0 0;-webkit-text-stroke:1.0px #333;">22.714,00</div>
<div class="t" style="left:350px;top:447.50px;font-size:9.22px;color:#222;font-weight:normal;font-family:'Liberation Sans';transform:scaleX(0.9131);transform-origin:0 0;">-0,2%</div>
<div class="t" style="left:340px;top:459.51px;font-size:11.45px;color:#222;font-weight:normal;font-family:'Liberation Sans';transform:scaleX(0.8545);transform-origin:0 0;-webkit-text-stroke:0.55px #222;">compared to JJJJ</div>
<div class="r" style="left:524px;top:351px;width:273px;height:30px;background:#02a4ee;"></div>
<div class="r" style="left:524px;top:351px;width:273px;height:1px;background:#5cc8f5;"></div>
<div class="r" style="left:524px;top:381px;width:273px;height:98px;background:#f2f2f2;border:1px solid #c9c9c9;border-top:none;box-sizing:border-box;"></div>
<div class="r" style="left:525px;top:450px;width:271px;height:1px;background:#fafafa;"></div>
<div class="t" style="left:621.7px;top:358.10px;font-size:14.53px;color:#2b4a66;font-weight:normal;font-family:'Liberation Sans';transform:scaleX(0.759);transform-origin:0 0;-webkit-text-stroke:0.3px #2b4a66;">Total expenses</div>
<div class="t" style="left:609.6px;top:395.87px;font-size:32.4px;color:#333;font-weight:normal;font-family:'Liberation Sans';transform:scaleX(0.6724);transform-origin:0 0;-webkit-text-stroke:1.0px #333;">14.790,00</div>
<div class="t" style="left:630.6px;top:447.50px;font-size:9.22px;color:#222;font-weight:normal;font-family:'Liberation Sans';transform:scaleX(0.8967);transform-origin:0 0;">-18,7%</div>
<div class="t" style="left:625px;top:459.51px;font-size:11.45px;color:#222;font-weight:normal;font-family:'Liberation Sans';transform:scaleX(0.8545);transform-origin:0 0;-webkit-text-stroke:0.55px #222;">compared to JJJJ</div>
<div class="r" style="left:812px;top:351px;width:258px;height:30px;background:#02a4ee;"></div>
<div class="r" style="left:812px;top:351px;width:258px;height:1px;background:#5cc8f5;"></div>
<div class="r" style="left:812px;top:381px;width:258px;height:98px;background:#f2f2f2;border:1px solid #c9c9c9;border-top:none;box-sizing:border-box;"></div>
<div class="r" style="left:813px;top:450px;width:256px;height:1px;background:#fafafa;"></div>
<div class="t" style="left:911.8px;top:358.10px;font-size:14.53px;color:#2b4a66;font-weight:normal;font-family:'Liberation Sans';transform:scaleX(0.7477);transform-origin:0 0;-webkit-text-stroke:0.3px #2b4a66;">Fixed costs</div>
<div class="t" style="left:896.9px;top:395.87px;font-size:32.4px;color:#333;font-weight:normal;font-family:'Liberation Sans';transform:scaleX(0.6662);transform-origin:0 0;-webkit-text-stroke:1.0px #333;">6.150,00</div>
<div class="t" style="left:918.3px;top:447.00px;font-size:9.22px;color:#222;font-weight:normal;font-family:'Liberation Sans';transform:scaleX(0.8556);transform-origin:0 0;">-15,7%</div>
<div class="t" style="left:894px;top:459.51px;font-size:11.45px;color:#222;font-weight:normal;font-family:'Liberation Sans';transform:scaleX(0.8568);transform-origin:0 0;-webkit-text-stroke:0.55px #222;">compared to JJJJ</div>
<div class="r" style="left:1085px;top:351px;width:279px;height:30px;background:#02a4ee;"></div>
<div class="r" style="left:1085px;top:351px;width:279px;height:1px;background:#5cc8f5;"></div>
<div class="r" style="left:1085px;top:381px;width:279px;height:98px;background:#f2f2f2;border:1px solid #c9c9c9;border-top:none;box-sizing:border-box;"></div>
<div class="r" style="left:1086px;top:450px;width:277px;height:1px;background:#fafafa;"></div>
<div class="t" style="left:1189.6px;top:358.10px;font-size:14.53px;color:#2b4a66;font-weight:normal;font-family:'Liberation Sans';transform:scaleX(0.7747);transform-origin:0 0;-webkit-text-stroke:0.3px #2b4a66;">Variable costs</div>
<div class="t" style="left:1179.5px;top:395.87px;font-size:32.4px;color:#333;font-weight:normal;font-family:'Liberation Sans';transform:scaleX(0.6979);transform-origin:0 0;-webkit-text-stroke:1.0px #333;">8.640,00</div>
<div class="t" style="left:1213.8px;top:439.60px;font-size:9.22px;color:#222;font-weight:normal;font-family:'Liberation Sans';transform:scaleX(0.8967);transform-origin:0 0;">-20,7%</div>
<div class="t" style="left:1188.8px;top:459.51px;font-size:11.45px;color:#222;font-weight:normal;font-family:'Liberation Sans';transform:scaleX(0.8556);transform-origin:0 0;-webkit-text-stroke:0.55px #222;">compared to JJJJ</div>
<div class="r" style="left:242px;top:511px;width:270px;height:31px;background:#02a4ee;"></div>
<div class="r" style="left:242px;top:511px;width:270px;height:1px;background:#5cc8f5;"></div>
<div class="r" style="left:242px;top:542px;width:270px;height:97px;background:#f2f2f2;border:1px solid #c9c9c9;border-top:none;box-sizing:border-box;"></div>
<div class="r" style="left:243px;top:610px;width:268px;height:1px;background:#fafafa;"></div>
<div class="t" style="left:355.2px;top:518.60px;font-size:14.53px;color:#2b4a66;font-weight:normal;font-family:'Liberation Sans';transform:scaleX(0.7471);transform-origin:0 0;-webkit-text-stroke:0.3px #2b4a66;">Balance</div>
<div class="t" style="left:331.8px;top:556.17px;font-size:32.4px;color:#333;font-weight:normal;font-family:'Liberation Sans';transform:scaleX(0.6979);transform-origin:0 0;-webkit-text-stroke:1.0px #333;">7.924,00</div>
<div class="t" style="left:357.3px;top:600.10px;font-size:9.22px;color:#222;font-weight:normal;font-family:'Liberation Sans';transform:scaleX(0.9241);transform-origin:0 0;">-20,7%</div>
<div class="t" style="left:341px;top:619.51px;font-size:11.45px;color:#222;font-weight:normal;font-family:'Liberation Sans';transform:scaleX(0.8568);transform-origin:0 0;-webkit-text-stroke:0.55px #222;">compared to JJJJ</div>
<div class="r" style="left:524px;top:511px;width:273px;height:31px;background:#02a4ee;"></div>
<div class="r" style="left:524px;top:511px;width:273px;height:1px;background:#5cc8f5;"></div>
<div class="r" style="left:524px;top:542px;width:273px;height:97px;background:#f2f2f2;border:1px solid #c9c9c9;border-top:none;box-sizing:border-box;"></div>
<div class="r" style="left:525px;top:610px;width:271px;height:1px;background:#fafafa;"></div>
<div class="t" style="left:618.9px;top:518.60px;font-size:14.53px;color:#2b4a66;font-weight:normal;font-family:'Liberation Sans';transform:scaleX(0.7406);transform-origin:0 0;-webkit-text-stroke:0.3px #2b4a66;">Average income</div>
<div class="t" style="left:615.6px;top:556.17px;font-size:32.4px;color:#333;font-weight:normal;font-family:'Liberation Sans';transform:scaleX(0.6725);transform-origin:0 0;-webkit-text-stroke:1.0px #333;">3.785,67</div>
<div class="t" style="left:651.2px;top:606.20px;font-size:9.22px;color:#222;font-weight:normal;font-family:'Liberation Sans';transform:scaleX(0.8716);transform-origin:0 0;">-0,2%</div>
<div class="t" style="left:623.7px;top:619.51px;font-size:11.45px;color:#222;font-weight:normal;font-family:'Liberation Sans';transform:scaleX(0.8556);transform-origin:0 0;-webkit-text-stroke:0.55px #222;">compared to JJJJ</div>
<div class="r" style="left:812px;top:511px;width:258px;height:31px;background:#02a4ee;"></div>
<div class="r" style="left:812px;top:511px;width:258px;height:1px;background:#5cc8f5;"></div>
<div class="r" style="left:812px;top:542px;width:258px;height:97px;background:#f2f2f2;border:1px solid #c9c9c9;border-top:none;box-sizing:border-box;"></div>
<div class="r" style="left:813px;top:610px;width:256px;height:1px;background:#fafafa;"></div>
<div class="t" style="left:891px;top:518.60px;font-size:14.53px;color:#2b4a66;font-weight:normal;font-family:'Liberation Sans';transform:scaleX(0.7497);transform-origin:0 0;-webkit-text-stroke:0.3px #2b4a66;">% of fixed expenses</div>
<div class="t" style="left:916.8px;top:556.17px;font-size:32.4px;color:#333;font-weight:normal;font-family:'Liberation Sans';transform:scaleX(0.6909);transform-origin:0 0;-webkit-text-stroke:1.0px #333;">42%</div>
<div class="t" style="left:918.6px;top:608.20px;font-size:9.22px;color:#222;font-weight:normal;font-family:'Liberation Sans';transform:scaleX(0.8351);transform-origin:0 0;">-15,7%</div>
<div class="t" style="left:893.3px;top:619.51px;font-size:11.45px;color:#222;font-weight:normal;font-family:'Liberation Sans';transform:scaleX(0.8545);transform-origin:0 0;-webkit-text-stroke:0.55px #222;">compared to JJJJ</div>
<div class="r" style="left:1085px;top:511px;width:279px;height:31px;background:#02a4ee;"></div>
<div class="r" style="left:1085px;top:511px;width:279px;height:1px;background:#5cc8f5;"></div>
<div class="r" style="left:1085px;top:542px;width:279px;height:97px;background:#f2f2f2;border:1px solid #c9c9c9;border-top:none;box-sizing:border-box;"></div>
<div class="r" style="left:1086px;top:610px;width:277px;height:1px;background:#fafafa;"></div>
<div class="t" style="left:1168px;top:518.60px;font-size:14.53px;color:#2b4a66;font-weight:normal;font-family:'Liberation Sans';transform:scaleX(0.7529);transform-origin:0 0;-webkit-text-stroke:0.3px #2b4a66;">% of variable expenses</div>
<div class="t" style="left:1202.6px;top:556.17px;font-size:32.4px;color:#333;font-weight:normal;font-family:'Liberation Sans';transform:scaleX(0.6847);transform-origin:0 0;-webkit-text-stroke:1.0px #333;">58%</div>
<div class="t" style="left:1223.4px;top:600.40px;font-size:9.22px;color:#222;font-weight:normal;font-family:'Liberation Sans';transform:scaleX(0.883);transform-origin:0 0;">-20,7%</div>
<div class="t" style="left:1198.4px;top:619.51px;font-size:11.45px;color:#222;font-weight:normal;font-family:'Liberation Sans';transform:scaleX(0.8501);transform-origin:0 0;-webkit-text-stroke:0.55px #222;">compared to JJJJ</div>
<div style="position:absolute;left:0;top:0;width:1486px;height:969px;overflow:hidden">
<div class="r" style="left:241px;top:662px;width:1124px;height:307px;background:#fff;"></div>
<div class="r" style="left:241px;top:662px;width:1124px;height:1px;background:#808080;"></div>
<div class="r" style="left:241px;top:662px;width:1px;height:307px;background:#9a9a9a;"></div>
<div class="r" style="left:1364px;top:662px;width:1px;height:307px;background:#808080;"></div>
<div class="r" style="left:481px;top:699px;width:834px;height:1px;background:#8c8c8c;"></div>
<div class="t" style="left:-533px;width:1000px;text-align:right;top:688.51px;font-size:30.7px;color:#111;font-weight:normal;font-family:'Liberation Sans';transform:scaleX(1.0);transform-origin:100% 0;letter-spacing:-0.75px;">30000,00 €</div>
<div class="r" style="left:481px;top:751px;width:834px;height:1px;background:#8c8c8c;"></div>
<div class="t" style="left:-533px;width:1000px;text-align:right;top:740.41px;font-size:30.7px;color:#111;font-weight:normal;font-family:'Liberation Sans';transform:scaleX(1.0);transform-origin:100% 0;letter-spacing:-0.75px;">25000,00 €</div>
<div class="r" style="left:481px;top:803px;width:834px;height:1px;background:#8c8c8c;"></div>
<div class="t" style="left:-533px;width:1000px;text-align:right;top:792.51px;font-size:30.7px;color:#111;font-weight:normal;font-family:'Liberation Sans';transform:scaleX(1.0);transform-origin:100% 0;letter-spacing:-0.75px;">20000,00 €</div>
<div class="r" style="left:481px;top:855px;width:834px;height:1px;background:#8c8c8c;"></div>
<div class="t" style="left:-533px;width:1000px;text-align:right;top:844.31px;font-size:30.7px;color:#111;font-weight:normal;font-family:'Liberation Sans';transform:scaleX(1.0);transform-origin:100% 0;letter-spacing:-0.75px;">15000,00 €</div>
<div class="r" style="left:481px;top:907px;width:834px;height:1px;background:#8c8c8c;"></div>
<div class="t" style="left:-533px;width:1000px;text-align:right;top:896.21px;font-size:30.7px;color:#111;font-weight:normal;font-family:'Liberation Sans';transform:scaleX(1.0);transform-origin:100% 0;letter-spacing:-0.75px;">10000,00 €</div>
<div class="r" style="left:481px;top:959px;width:834px;height:1px;background:#8c8c8c;"></div>
<div class="t" style="left:-533px;width:1000px;text-align:right;top:948.21px;font-size:30.7px;color:#111;font-weight:normal;font-family:'Liberation Sans';transform:scaleX(1.0);transform-origin:100% 0;letter-spacing:-0.75px;">5000,00 €</div>
<div class="r" style="left:490px;top:699px;width:1px;height:270px;background:#8c8c8c;"></div>
<div class="r" style="left:567.0px;top:940px;width:51.7px;height:29px;background:#4168a4;"></div>
<div class="r" style="left:670.2px;top:927px;width:51.7px;height:42px;background:#7796c3;"></div>
<div class="r" style="left:721.8px;top:956.2px;width:51.7px;height:12.799999999999955px;background:#96acd2;"></div>
<div class="r" style="left:773.4px;top:915.2px;width:51.7px;height:53.799999999999955px;background:#b3c3dd;"></div>
<div class="r" style="left:825.0px;top:873px;width:51.7px;height:96px;background:#d0dbea;"></div>
<div class="r" style="left:876.6px;top:901.5px;width:51.7px;height:67.5px;background:#3a5a8a;"></div>
<div class="r" style="left:928.2px;top:861px;width:51.7px;height:108px;background:#4168a4;"></div>
<div class="r" style="left:979.8px;top:820px;width:51.7px;height:149px;background:#5a7db6;"></div>
<div class="r" style="left:1031.4px;top:849.7px;width:51.7px;height:119.29999999999995px;background:#7796c3;"></div>
<div class="r" style="left:1083.0px;top:806.7px;width:51.7px;height:162.29999999999995px;background:#96acd2;"></div>
<div class="r" style="left:1134.6px;top:765.7px;width:51.7px;height:203.29999999999995px;background:#b3c3dd;"></div>
<div class="r" style="left:1186.2px;top:795.5px;width:51.7px;height:173.5px;background:#d0dbea;"></div>
<div class="r" style="left:1237.8px;top:752.8px;width:51.7px;height:216.20000000000005px;background:#3a5a8a;"></div>
</div>
<div class="r" style="left:0px;top:985px;width:1486px;height:28px;background:#efefef;"></div>
<div class="r" style="left:780px;top:988px;width:1px;height:20px;background:#cfcfcf;"></div>
<svg class="r" style="left:1151px;top:989px;" width="16" height="16" viewBox="0 0 16 16"><path d="M3 7A5 5 0 0 1 12 4M13 9A5 5 0 0 1 4 12" fill="none" stroke="#b0b0b0" stroke-width="1.5"/><path d="M10 2L13 4.5L10 6.5ZM6 13.5L3 11.5L6 9.5Z" fill="#b0b0b0"/></svg>
<div class="t" style="left:1186px;top:993.27px;font-size:11.5px;color:#222;font-weight:normal;font-family:'Liberation Sans';">Ins</div>
<div class="r" style="left:1218px;top:988px;width:1px;height:20px;background:#cfcfcf;"></div>
<div class="t" style="left:1225px;top:993.27px;font-size:11.5px;color:#222;font-weight:normal;font-family:'Liberation Sans';">AUTO</div>
<div class="r" style="left:1272px;top:997px;width:8px;height:1.3px;background:#d03030;"></div>
<div class="r" style="left:1288px;top:997px;width:108px;height:1px;background:#d0d0d0;"></div>
<div class="r" style="left:1334px;top:992px;width:11px;height:11px;background:#fff;border:1px solid #555;border-radius:50%;box-sizing:border-box;"></div>
<svg class="r" style="left:1400px;top:992px;" width="11" height="11" viewBox="0 0 11 11"><path d="M5.5 1V10M1 5.5H10" stroke="#777" stroke-width="1"/></svg>
<div class="t" style="left:1426px;top:993.27px;font-size:11.5px;color:#222;font-weight:normal;font-family:'Liberation Sans';">100%</div>
<div class="t" style="left:1465px;top:987.69px;font-size:11px;color:#555;font-weight:normal;font-family:'Liberation Sans';">»</div>
</body></html>
